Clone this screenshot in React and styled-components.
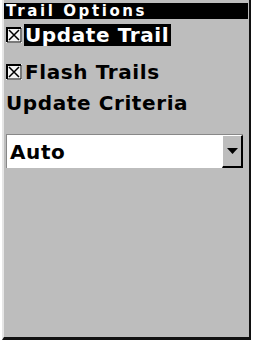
import React from "react";
import styled, { createGlobalStyle } from "styled-components";

const GlobalStyle = createGlobalStyle`
  html, body {
    margin: 0;
    padding: 0;
    background: #ffffff;
  }
  body {
    width: 256px;
    height: 343px;
    overflow: hidden;
  }
`;

const Screen = styled.div`
  width: 256px;
  height: 343px;
  padding: 0 5px 3px 2px;
  box-sizing: border-box;
  background: #ffffff;
`;

const Panel = styled.div`
  height: 100%;
  box-sizing: border-box;
  background: #bdbdbd;
  border-left: 2px solid #e6e6e6;
  border-right: 2px solid #111111;
  border-bottom: 3px solid #111111;
  padding: 3px 0 0 0;
  display: flex;
  flex-direction: column;
  font-family: "DejaVu Sans", "Liberation Sans", sans-serif;
  font-weight: bold;
  color: #000000;
`;

const TitleBar = styled.div`
  background: #000000;
  color: #ffffff;
  height: 16px;
  margin: 0 1px 0 0;
  padding: 0 2px;
  font-size: 15px;
  line-height: 16px;
  letter-spacing: 2.6px;
  overflow: hidden;
`;

const Row = styled.div`
  display: flex;
  align-items: center;
  height: 22px;
  margin-top: ${p => p.mt || "0"};
  padding-left: 2px;
  gap: 2px;
`;

const Label = styled.span`
  font-size: 20px;
  line-height: 22px;
  letter-spacing: 0.6px;
  padding: 0 2px 0 1px;
  background: ${p => (p.selected ? "#000000" : "transparent")};
  color: ${p => (p.selected ? "#ffffff" : "#000000")};
`;

const Heading = styled.div`
  font-size: 20px;
  line-height: 22px;
  letter-spacing: 0.6px;
  padding-left: 2px;
  margin-top: 9px;
`;

const Select = styled.div`
  margin: 20px 6px 0 2px;
  height: 34px;
  background: #ffffff;
  border-top: 1px solid #888888;
  border-left: 1px solid #888888;
  display: flex;
  align-items: center;
  justify-content: space-between;
  padding-left: 3px;
  box-sizing: border-box;
`;

const SelectValue = styled.span`
  font-size: 20px;
  letter-spacing: 0.6px;
`;

const ArrowButton = styled.div`
  width: 21px;
  height: 100%;
  box-sizing: border-box;
  background: #bdbdbd;
  border-top: 1px solid #ffffff;
  border-left: 1px solid #ffffff;
  border-right: 2px solid #000000;
  border-bottom: 2px solid #000000;
  display: flex;
  align-items: center;
  justify-content: center;
`;

const CheckBox = ({ checked }) => (
  <svg width="16" height="16" viewBox="0 0 16 16">
    <rect x="0" y="0" width="16" height="16" fill="#f4f4f4" />
    <path d="M1 15V1h14" stroke="#000" strokeWidth="2" fill="none" />
    <path d="M15 1v14H1" stroke="#000" strokeWidth="1" fill="none" />
    {checked && (
      <path d="M3 3l10 10M13 3L3 13" stroke="#000" strokeWidth="1.5" />
    )}
  </svg>
);

const DownArrow = () => (
  <svg width="11" height="6" viewBox="0 0 11 6">
    <path d="M0 0h11L5.5 6z" fill="#000" />
  </svg>
);

export default function App() {
  return (
    <>
      <GlobalStyle />
      <Screen>
        <Panel>
          <TitleBar>Trail Options</TitleBar>
          <Row mt="5px">
            <CheckBox checked />
            <Label selected>Update Trail</Label>
          </Row>
          <Row mt="15px">
            <CheckBox checked />
            <Label>Flash Trails</Label>
          </Row>
          <Heading>Update Criteria</Heading>
          <Select>
            <SelectValue>Auto</SelectValue>
            <ArrowButton>
              <DownArrow />
            </ArrowButton>
          </Select>
        </Panel>
      </Screen>
    </>
  );
}
